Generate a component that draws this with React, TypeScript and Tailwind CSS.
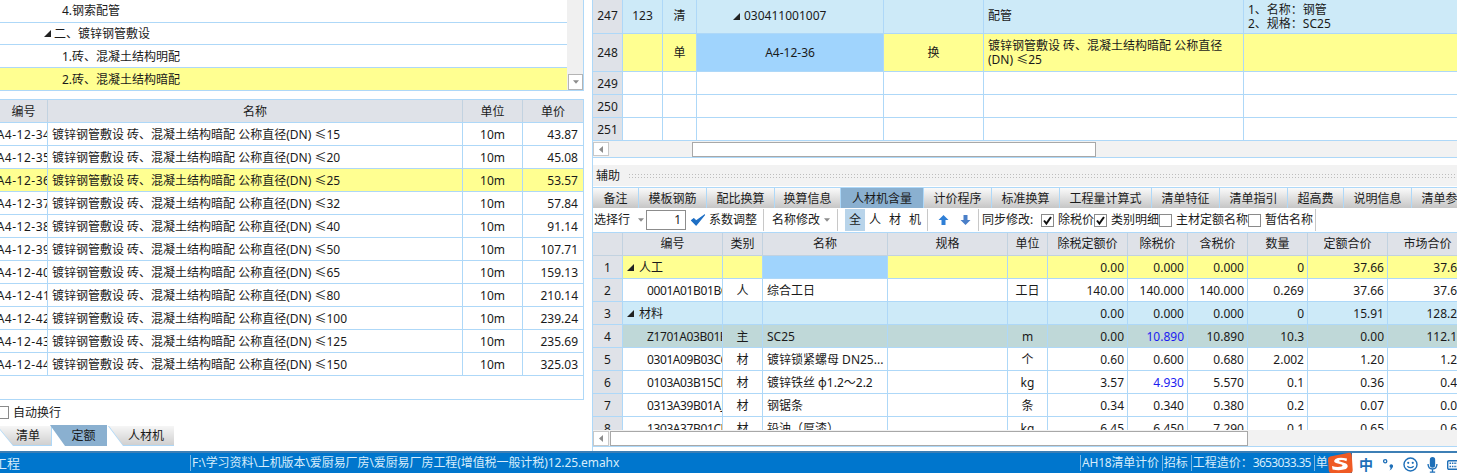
import React from "react";

const Tri = () => (
  <svg width="7" height="7" viewBox="0 0 7 7" className="shrink-0">
    <polygon points="7,0 7,7 0,7" fill="#222" />
  </svg>
);

const Check = ({ on }: { on: boolean }) => (
  <svg width="13" height="13" viewBox="0 0 13 13" className="shrink-0">
    <rect x="0.5" y="0.5" width="12" height="12" fill="#fff" stroke="#8a8a8a" />
    {on && <path d="M3 6.5 L5.4 9.6 L10 3" fill="none" stroke="#111" strokeWidth="2" />}
  </svg>
);

const Caret = () => (
  <svg width="6" height="4" viewBox="0 0 7 4" className="shrink-0">
    <polygon points="0,0 7,0 3.5,4" fill="#8c8c8c" />
  </svg>
);

const Sep = () => <div className="w-px h-[22px] bg-[#c8c8c8] shrink-0" />;

const treeRows = [
  { t: "4.钢索配管", c: "h-[23px] pl-[62px]", tri: false },
  { t: "二、镀锌钢管敷设", c: "h-[22px] pl-[44px]", tri: true },
  { t: "1.砖、混凝土结构明配", c: "h-[23px] pl-[62px] pt-[2px]", tri: false },
  { t: "2.砖、混凝土结构暗配", c: "h-[23px] pl-[62px] pt-[2px] bg-[#ffff91]", tri: false },
];

const quota = [
  ["A4-12-34", "≤15", "43.87"],
  ["A4-12-35", "≤20", "45.08"],
  ["A4-12-36", "≤25", "53.57"],
  ["A4-12-37", "≤32", "57.84"],
  ["A4-12-38", "≤40", "91.14"],
  ["A4-12-39", "≤50", "107.71"],
  ["A4-12-40", "≤65", "159.13"],
  ["A4-12-41", "≤80", "210.14"],
  ["A4-12-42", "≤100", "239.24"],
  ["A4-12-43", "≤125", "235.69"],
  ["A4-12-44", "≤150", "325.03"],
];

const tabs = [
  ["备注", "w-[46px]"],
  ["模板钢筋", "w-[68px]"],
  ["配比换算", "w-[68px]"],
  ["换算信息", "w-[66px]"],
  ["人材机含量", "w-[83px]"],
  ["计价程序", "w-[68px]"],
  ["标准换算", "w-[68px]"],
  ["工程量计算式", "w-[92px]"],
  ["清单特征", "w-[68px]"],
  ["清单指引", "w-[68px]"],
  ["超高费", "w-[56px]"],
  ["说明信息", "w-[68px]"],
  ["清单参考", "w-[68px]"],
];

const headers = ["", "编号", "类别", "名称", "规格", "单位", "除税定额价", "除税价", "含税价", "数量", "定额合价", "市场合价"];

type Row = { n: string; code?: string; kind?: string; name?: string; unit?: string; v: string[]; bg: string; group?: string; blue?: boolean };

const rows: Row[] = [
  { n: "1", group: "人工", v: ["0.00", "0.000", "0.000", "0", "37.66", "37.66"], bg: "bg-[#ffff91]" },
  { n: "2", code: "0001A01B01BC", kind: "人", name: "综合工日", unit: "工日", v: ["140.00", "140.000", "140.000", "0.269", "37.66", "37.66"], bg: "bg-white" },
  { n: "3", group: "材料", v: ["0.00", "0.000", "0.000", "0", "15.91", "128.24"], bg: "bg-[#cdeaf8]" },
  { n: "4", code: "Z1701A03B01EC", kind: "主", name: "SC25", unit: "m", v: ["0.00", "10.890", "10.890", "10.3", "0.00", "112.17"], bg: "bg-[#bfd8d8]", blue: true },
  { n: "5", code: "0301A09B03C6", kind: "材", name: "镀锌锁紧螺母 DN25...", unit: "个", v: ["0.60", "0.600", "0.680", "2.002", "1.20", "1.20"], bg: "bg-white" },
  { n: "6", code: "0103A03B15CE", kind: "材", name: "镀锌铁丝 φ1.2～2.2", unit: "kg", v: ["3.57", "4.930", "5.570", "0.1", "0.36", "0.49"], bg: "bg-white", blue: true },
  { n: "7", code: "0313A39B01AJ", kind: "材", name: "钢锯条", unit: "条", v: ["0.34", "0.340", "0.380", "0.2", "0.07", "0.08"], bg: "bg-white" },
  { n: "8", code: "1303A37B01CF", kind: "材", name: "铅油（厚漆）", unit: "kg", v: ["6.45", "6.450", "7.290", "0.1", "0.65", "0.65"], bg: "bg-white" },
];

const cell = "border-r border-b border-[#aed8f8] pt-px flex items-center overflow-hidden";
const topCols = "grid grid-cols-[30px_40px_34px_187px_100px_260px_1fr]";
const botCols = "grid grid-cols-[30px_100px_40px_125px_120px_40px_80px_60px_60px_60px_80px_80px] w-[1010px]";
const num = "bg-[#dfe2e8] justify-center";
const grad = "bg-[linear-gradient(#f6f6f6,#d0d0d0)]";

export default function App() {
  return (
    <div className="w-[1457px] h-[473px] overflow-hidden flex flex-col bg-white text-[12px] leading-[16px] text-[#1a1a1a] whitespace-nowrap font-['Noto_Sans','Noto_Sans_CJK_SC',sans-serif]">
      <div className="flex h-[451px] shrink-0">
        {/* left column */}
        <div className="w-[584px] shrink-0 flex flex-col">
          <div className="flex h-[91px] shrink-0">
            <div className="flex-1 flex flex-col">
              {treeRows.map((r) => (
                <div key={r.t} className={`${r.c} flex items-center gap-[3px] border-b border-[#aed8f8] shrink-0`}>
                  {r.tri && <Tri />}
                  <span>{r.t}</span>
                </div>
              ))}
            </div>
            <div className="w-[17px] bg-[#f0f0f0] border-r border-b border-[#aed8f8] flex flex-col justify-end">
              <div className="h-[16px] w-[15px] ml-px bg-white border border-[#b4b4b4] flex items-center justify-center">
                <Caret />
              </div>
            </div>
          </div>

          <div className="mt-[8px] h-[301px] shrink-0 border-t border-r border-b border-[#aed8f8]">
            <div className="grid grid-cols-[48px_415px_60px_60px] h-[23px] bg-[#dfe2e8] border-b border-[#aed8f8]">
              {["编号", "名称", "单位", "单价"].map((h, i) => (
                <div key={h} className={`flex items-center justify-center pt-px ${i < 3 ? "border-r border-[#c2d2e0]" : ""}`}>{h}</div>
              ))}
            </div>
            {quota.map((q) => (
              <div key={q[0]} className={`grid grid-cols-[48px_415px_60px_60px] h-[23px] ${q[0] === "A4-12-36" ? "bg-[#ffff91]" : "bg-white"}`}>
                <div className={`${cell} justify-center`}><span className="shrink-0 tracking-[0.5px]">{q[0]}</span></div>
                <div className={`${cell} pl-[4px]`}>镀锌钢管敷设 砖、混凝土结构暗配 公称直径(DN) {q[1]}</div>
                <div className={`${cell} justify-center`}>10m</div>
                <div className={`${cell} justify-end pr-[5px] border-r-0`}>{q[2]}</div>
              </div>
            ))}
          </div>

          <div className="h-[25px] flex items-center gap-[4px] -ml-[4px] shrink-0">
            <Check on={false} />
            <span>自动换行</span>
          </div>

          <div className="flex h-[21px] shrink-0">
            <div className="w-[52px] h-[20px] mt-px shrink-0 bg-[#aed8f8] [clip-path:polygon(0_0,100%_0,100%_100%,13px_100%,0_4px)]">
              <div className={`w-[51px] h-[19px] ${grad} flex items-center justify-center pl-[5px] pt-px [clip-path:polygon(0_0,100%_0,100%_100%,13px_100%,0_3px)]`}>清单</div>
            </div>
            <div className="w-[57px] -ml-[2px] shrink-0 flex items-center justify-center pl-[10px] pt-px bg-[#8ab0d0] [clip-path:polygon(0_0,100%_0,100%_100%,15px_100%)]">定额</div>
            <div className="w-[66px] h-[20px] mt-px ml-px shrink-0 bg-[#aed8f8] [clip-path:polygon(0_0,100%_0,100%_100%,15px_100%)]">
              <div className={`w-[65px] h-[19px] ml-px ${grad} flex items-center justify-center pl-[9px] pt-px [clip-path:polygon(0_0,100%_0,100%_100%,14px_100%)]`}>人材机</div>
            </div>
          </div>
        </div>

        {/* right column */}
        <div className="ml-[8px] w-[865px] shrink-0 flex flex-col border-l border-[#aed8f8]">
          <div className={`${topCols} h-[34px] bg-[#cdeaf8]`}>
            <div className={`${cell} ${num} pb-[2px]`}>247</div>
            <div className={`${cell} justify-center pb-[2px]`}>123</div>
            <div className={`${cell} justify-center pb-[2px]`}>清</div>
            <div className={`${cell} pl-[36px] gap-[4px] pb-[2px]`}><Tri /><span>030411001007</span></div>
            <div className={cell}></div>
            <div className={`${cell} pl-[4px] pb-[2px]`}>配管</div>
            <div className={`${cell} border-r-0 pl-[4px] leading-[14px]`}>
              <div>1、名称：钢管<br />2、规格：SC25</div>
            </div>
          </div>
          <div className={`${topCols} h-[38px] bg-[#ffff91]`}>
            <div className={`${cell} ${num}`}>248</div>
            <div className={cell}></div>
            <div className={`${cell} justify-center`}>单</div>
            <div className={`${cell} justify-center bg-[#a0d4fd]`}>A4-12-36</div>
            <div className={`${cell} justify-center`}>换</div>
            <div className={`${cell} pl-[4px] leading-[14px]`}>
              <div>镀锌钢管敷设 砖、混凝土结构暗配 公称直径<br />(DN) ≤25</div>
            </div>
            <div className={`${cell} border-r-0`}></div>
          </div>
          {["249", "250", "251"].map((n) => (
            <div key={n} className={`${topCols} h-[23px]`}>
              <div className={`${cell} ${num}`}>{n}</div>
              <div className={cell}></div>
              <div className={cell}></div>
              <div className={cell}></div>
              <div className={cell}></div>
              <div className={cell}></div>
              <div className={`${cell} border-r-0`}></div>
            </div>
          ))}
          <div className="h-[17px] shrink-0 bg-[#f2f2f2] border-b border-[#aed8f8] flex items-center">
            <div className="w-[16px] h-[14px] bg-white border border-[#c8c8c8] flex items-center justify-center shrink-0">
              <svg width="4" height="7" viewBox="0 0 4 7"><polygon points="4,0 4,7 0,3.5" fill="#8c8c8c" /></svg>
            </div>
            <div className="ml-[83px] w-[404px] h-[15px] bg-white border border-[#a8a8a8] shrink-0" />
          </div>

          <div className="h-[7px] shrink-0" />
          <div className="h-[21px] shrink-0 bg-[#f2f2f2] flex items-center pl-[3px] gap-[8px]">
            <span>辅助</span>
            <div className="flex-1 h-[6px] bg-[radial-gradient(#bdbdbd_0.7px,transparent_0.8px)] bg-[length:3px_3px]" />
          </div>

          <div className="h-[21px] mt-px shrink-0 flex overflow-hidden">
            {tabs.map(([t, w]) => (
              <div key={t} className={`${w} shrink-0 flex items-center justify-center pt-px border-t border-r border-[#aed8f8] ${t === "人材机含量" ? "bg-[#8ab0d0]" : "bg-[linear-gradient(#fafafa,#c6c6c6)]"}`}>{t}</div>
            ))}
          </div>

          <div className="h-[24px] shrink-0 flex items-center overflow-hidden pl-[1px]">
            <span className="w-[37px] shrink-0">选择行</span>
            <div className="ml-[7px]"><Caret /></div>
            <div className="ml-[2px] w-[40px] h-[20px] border border-[#8c8c8c] flex items-center justify-end pr-[4px] shrink-0">1</div>
            <svg width="16" height="14" viewBox="0 0 16 15" className="ml-[4px] shrink-0"><path d="M1 8 L6 13 L15 2 L6 8.5 L3.5 6 Z" fill="#1f6fc4" stroke="#1f6fc4" strokeWidth="1.2" strokeLinejoin="round" /></svg>
            <span className="ml-[3px] w-[48px] shrink-0">系数调整</span>
            <div className="ml-[6px]"><Sep /></div>
            <span className="ml-[8px] w-[48px] shrink-0">名称修改</span>
            <div className="ml-[4px]"><Caret /></div>
            <div className="ml-[7px]"><Sep /></div>
            <div className="ml-[7px] w-[20px] h-[22px] bg-[#b8d4ea] flex items-center justify-center shrink-0">全</div>
            <span className="ml-[4px] w-[12px] shrink-0">人</span>
            <span className="ml-[8px] w-[12px] shrink-0">材</span>
            <span className="ml-[8px] w-[12px] shrink-0">机</span>
            <div className="ml-[6px]"><Sep /></div>
            <svg width="11" height="10" viewBox="0 0 11 10" className="ml-[10px] shrink-0"><path d="M5.5 0 L10.5 5 H7.5 V10 H3.5 V5 H0.5 Z" fill="#2f7fd6" /></svg>
            <svg width="11" height="10" viewBox="0 0 11 10" className="ml-[11px] shrink-0"><path d="M5.5 10 L10.5 5 H7.5 V0 H3.5 V5 H0.5 Z" fill="#4a7fc8" /></svg>
            <div className="ml-[7px]"><Sep /></div>
            <span className="ml-[3px] w-[56px] shrink-0">同步修改:</span>
            <div className="ml-[3px]"><Check on /></div>
            <span className="ml-[4px] w-[36px] shrink-0">除税价</span>
            <Check on />
            <span className="ml-[4px] w-[48px] shrink-0">类别明细</span>
            <Check on={false} />
            <span className="ml-[4px] w-[72px] shrink-0">主材定额名称</span>
            <Check on={false} />
            <span className="ml-[4px] w-[48px] shrink-0">暂估名称</span>
            <div className="ml-[2px]"><Sep /></div>
          </div>

          <div className="h-[198px] shrink-0 overflow-hidden">
            <div className={`${botCols} h-[24px] bg-[#dfe2e8] border-t border-[#aed8f8]`}>
              {headers.map((h, i) => (
                <div key={i} className="flex items-center justify-center border-r border-b border-[#c2d2e0]">{h}</div>
              ))}
            </div>
            {rows.map((r) => (
              <div key={r.n} className={`${botCols} h-[23px] ${r.bg}`}>
                <div className={`${cell} ${num}`}>{r.n}</div>
                {r.group ? (
                  <div className={`${cell} pl-[4px] gap-[5px]`}><Tri /><span>{r.group}</span></div>
                ) : (
                  <div className={`${cell} pl-[24px]`}><span className="tracking-[-0.4px]">{r.code}</span></div>
                )}
                <div className={`${cell} justify-center`}>{r.kind}</div>
                <div className={`${cell} pl-[4px] ${r.n === "1" ? "bg-[#a0d4fd]" : ""}`}>{r.name}</div>
                <div className={cell}></div>
                <div className={`${cell} justify-center`}>{r.unit}</div>
                {r.v.map((v, i) => (
                  <div key={i} className={`${cell} justify-end pr-[3px] ${i === 1 && r.blue ? "text-[#1c1cf0]" : ""}`}>{v}</div>
                ))}
              </div>
            ))}
          </div>

          <div className="h-[17px] shrink-0 bg-[#f2f2f2] border-b border-[#aed8f8] flex items-center">
            <div className="w-[16px] h-[15px] bg-white border border-[#c8c8c8] flex items-center justify-center shrink-0">
              <svg width="4" height="7" viewBox="0 0 4 7"><polygon points="4,0 4,7 0,3.5" fill="#8c8c8c" /></svg>
            </div>
            <div className="ml-[1px] w-[638px] h-[15px] bg-white border border-[#a8a8a8] shrink-0" />
          </div>
        </div>
      </div>

      {/* status bar */}
      <div className="h-[22px] shrink-0 flex items-center bg-[#0076cd] border-t-2 border-[#3d7fb5] text-[#d6ecfb]">
        <div className="w-[190px] shrink-0 overflow-hidden text-[13px]"><span className="-ml-[6px] inline-block">工程</span></div>
        <div className="w-[890px] shrink-0 overflow-hidden border-l border-[#7fb6e0] pl-px tracking-[-0.08px]">F:\学习资料\上机版本\爱厨易厂房\爱厨易厂房工程(增值税一般计税)12.25.emahx</div>
        <div className="w-[250px] shrink-0 overflow-hidden flex items-center">
          <span className="border-l border-[#7fb6e0] pl-px tracking-[-0.2px]">AH18清单计价</span>
          <span className="ml-[3px] border-l border-[#7fb6e0] pl-px">招标</span>
          <span className="ml-[3px] border-l border-[#7fb6e0] pl-px">工程造价：<span className="tracking-[-0.7px]">3653033.35</span></span>
          <span className="ml-[3px] border-l border-[#7fb6e0] pl-px">单位</span>
        </div>
        <div className="w-[127px] h-full shrink-0 flex items-center relative">
          <div className="w-[22px] h-full bg-[#0076cd] shrink-0" />
          <div className="flex-1 h-full bg-white flex items-center pl-[7px] pt-[3px] overflow-hidden">
            <span className="text-[14px] leading-[16px] font-bold text-[#1e6fb8] w-[14px] shrink-0">中</span>
            <svg width="10" height="13" viewBox="0 0 10 13" className="ml-[10px] shrink-0">
              <circle cx="2.2" cy="3.2" r="1.6" fill="none" stroke="#1e6fb8" strokeWidth="1.3" />
              <path d="M6.5 8 a1.8 1.8 0 1 1 3 1.5 q-0.6 2 -3 3 q1.2 -1.4 1 -2.8 q-1 -0.4 -1 -1.7 Z" fill="#1e6fb8" />
            </svg>
            <svg width="15" height="15" viewBox="0 0 18 18" className="ml-[10px] shrink-0">
              <circle cx="9" cy="9" r="7.8" fill="none" stroke="#1e6fb8" strokeWidth="1.7" />
              <circle cx="6.3" cy="7" r="1.3" fill="#1e6fb8" />
              <circle cx="11.7" cy="7" r="1.3" fill="#1e6fb8" />
              <path d="M5.2 11 q3.8 3.4 7.6 0" fill="none" stroke="#1e6fb8" strokeWidth="1.5" />
            </svg>
            <svg width="11" height="16" viewBox="0 0 12 18" className="ml-[9px] shrink-0">
              <rect x="3" y="0" width="6" height="12" rx="3" fill="#1e6fb8" />
              <path d="M1 8 q0 5.5 5 5.5 q5 0 5 -5.5 M6 13.5 V16.5 M3 17 H9" fill="none" stroke="#1e6fb8" strokeWidth="1.5" />
            </svg>
            <svg width="16" height="10" viewBox="0 0 16 10" className="ml-[9px] shrink-0">
              <rect x="0.7" y="0.7" width="14.6" height="8.6" rx="1.2" fill="none" stroke="#1e6fb8" strokeWidth="1.4" />
              <path d="M2.5 3.3 H13.5 M2.5 6.5 H13.5" stroke="#1e6fb8" strokeWidth="1.6" strokeDasharray="1.5 0.9" />
            </svg>
          </div>
          <svg width="27" height="21" viewBox="0 0 27 21" className="absolute left-[-4px] top-[-1px]">
            <path d="M4 4.5 L23 0.7 Q25.5 0.3 25.7 3 L26.7 18 Q26.8 21 24 21 L5 21 Q3 21 2.8 18.5 L2 7 Q2 5 4 4.5 Z" fill="#ef5a24" />
            <path d="M21 6.5 Q13 5 9.5 7 Q6.5 9.5 10 11 L15.5 12.5 Q17.5 13.5 15.5 14.5 Q11 15.5 6 14 L6.5 17.5 Q14 19 20 17 Q23.5 14 20 11.5 L14 9.5 Q12 8.7 14 8.2 Q17 7.8 20.5 9.3 Z" fill="#fff" />
          </svg>
        </div>
      </div>
    </div>
  );
}
